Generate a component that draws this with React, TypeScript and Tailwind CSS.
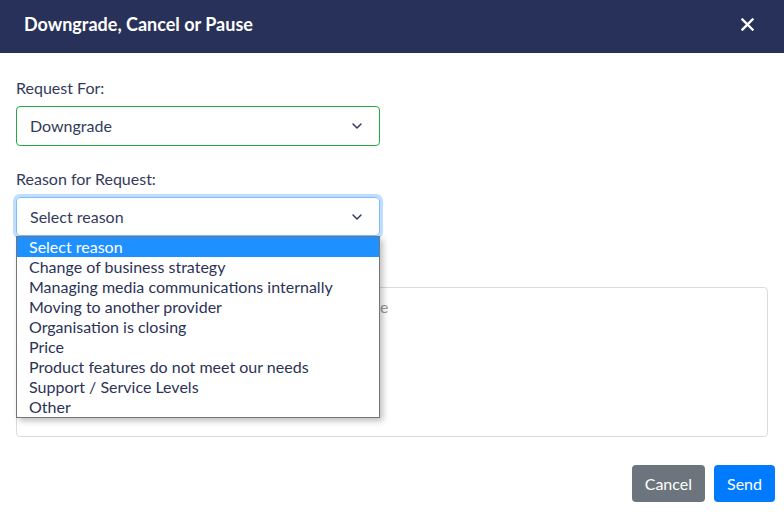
import { FiChevronDown } from "react-icons/fi";

const REASONS = [
  "Select reason",
  "Change of business strategy",
  "Managing media communications internally",
  "Moving to another provider",
  "Organisation is closing",
  "Price",
  "Product features do not meet our needs",
  "Support / Service Levels",
  "Other",
];

export default function App() {
  return (
    <div className="w-[784px] h-[515px] bg-white font-['Lato','Liberation_Sans',sans-serif] text-[#343a5c] overflow-hidden">
      <div className="h-[53px] bg-[#283159] flex items-center justify-between pl-6 pr-[30px] pb-[5px]">
        <h1 className="text-white text-[18px] font-bold">Downgrade, Cancel or Pause</h1>
        <svg width="13" height="13" viewBox="0 0 13 13" className="text-white">
          <path d="M1.5 1.5L11.5 11.5M11.5 1.5L1.5 11.5" stroke="currentColor" strokeWidth="2.4" strokeLinecap="square" />
        </svg>
      </div>

      <div className="px-4 pt-[26px]">
        <label className="block text-[16px] leading-[18px] mb-[9px]">Request For:</label>
        <div className="w-[364px] h-[40px] border border-[#28a745] rounded-[4px] flex items-center justify-between pl-[13px] pr-[14px] text-[16px]">
          <span>Downgrade</span>
          <FiChevronDown size={16} strokeWidth={2.2} />
        </div>

        <label className="block text-[16px] leading-[18px] mt-[24px] mb-[9px]">Reason for Request:</label>
        <div className="relative w-[364px]">
          <div className="h-[39px] border border-[#80bdff] rounded-[4px] shadow-[0_0_0_3px_rgba(0,123,255,0.25)] flex items-center justify-between pl-[13px] pr-[14px] text-[16px]">
            <span>Select reason</span>
            <FiChevronDown size={16} strokeWidth={2.2} />
          </div>
          <ul className="absolute left-0 top-[39px] w-[364px] z-10 bg-white border border-[#767676] shadow-[3px_3px_6px_rgba(0,0,0,0.25)] text-[16px] text-[#2c3356]">
            {REASONS.map((r, i) => (
              <li
                key={r}
                className={
                  i === 0
                    ? "h-[20px] leading-[20px] pl-3 bg-[#1e90ff] text-white"
                    : "h-[20px] leading-[20px] pl-3"
                }
              >
                {r}
              </li>
            ))}
          </ul>
        </div>

        <div className="mt-[51px] w-[752px] h-[150px] border border-[#dcdcdc] rounded-[4px] px-3 pt-[7px] text-[16px] text-[#999999]">
          Please provide any further details about the change
        </div>

        <div className="flex justify-end gap-[9px] mt-[28px] -mr-[7px]">
          <button className="h-[37px] px-[13px] rounded-[4px] bg-[#6c757d] text-white text-[16px]">Cancel</button>
          <button className="h-[37px] px-[13px] rounded-[4px] bg-[#007bff] text-white text-[16px]">Send</button>
        </div>
      </div>
    </div>
  );
}
